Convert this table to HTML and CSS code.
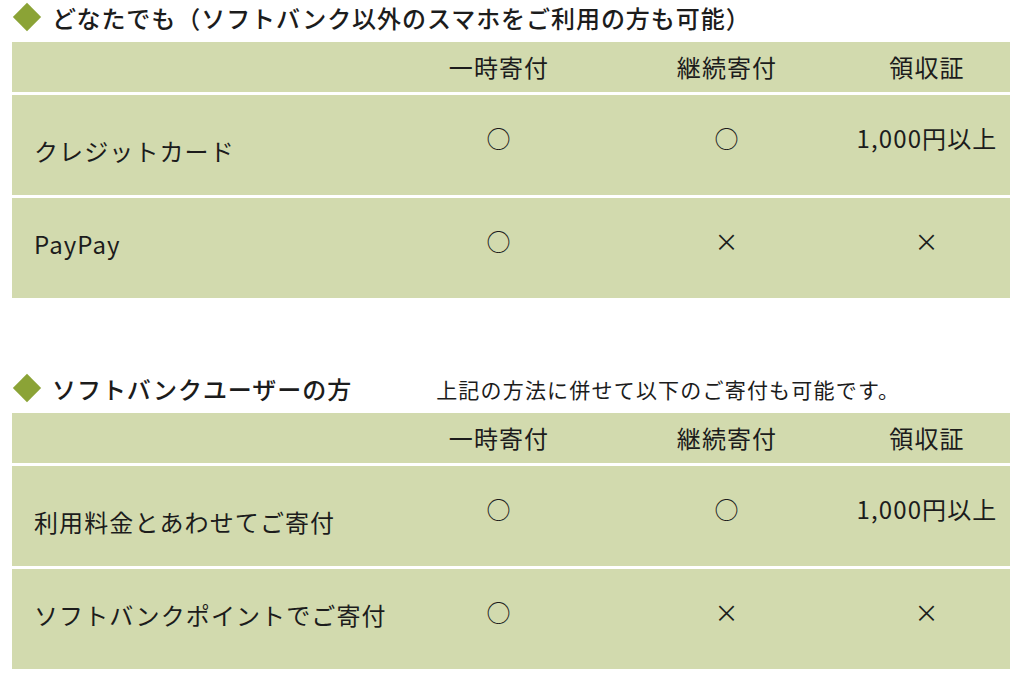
FILE: index.html
```html
<!DOCTYPE html>
<html lang="ja">
<head>
<meta charset="utf-8">
<title>寄付方法</title>
<link rel="stylesheet" href="styles.css">
</head>
<body>
<div class="page">
  <section class="block">
    <div class="heading">
      <span class="diamond"></span>
      <h2 class="title">どなたでも（ソフトバンク以外のスマホをご利用の方も可能）</h2>
    </div>
    <div class="table">
      <div class="row head">
        <div class="cell label"></div>
        <div class="cell">一時寄付</div>
        <div class="cell">継続寄付</div>
        <div class="cell">領収証</div>
      </div>
      <div class="row">
        <div class="cell label label-low">クレジットカード</div>
        <div class="cell">○</div>
        <div class="cell">○</div>
        <div class="cell">1,000円以上</div>
      </div>
      <div class="row">
        <div class="cell label">PayPay</div>
        <div class="cell">○</div>
        <div class="cell">×</div>
        <div class="cell">×</div>
      </div>
    </div>
  </section>

  <section class="block block-second">
    <div class="heading">
      <span class="diamond"></span>
      <h2 class="title">ソフトバンクユーザーの方</h2>
      <p class="note">上記の方法に併せて以下のご寄付も可能です。</p>
    </div>
    <div class="table">
      <div class="row head">
        <div class="cell label"></div>
        <div class="cell">一時寄付</div>
        <div class="cell">継続寄付</div>
        <div class="cell">領収証</div>
      </div>
      <div class="row">
        <div class="cell label label-low">利用料金とあわせてご寄付</div>
        <div class="cell">○</div>
        <div class="cell">○</div>
        <div class="cell">1,000円以上</div>
      </div>
      <div class="row">
        <div class="cell label">ソフトバンクポイントでご寄付</div>
        <div class="cell">○</div>
        <div class="cell">×</div>
        <div class="cell">×</div>
      </div>
    </div>
  </section>
</div>
</body>
</html>
```

FILE: styles.css
```css
html, body {
  margin: 0;
  padding: 0;
  background: #ffffff;
}

body {
  font-family: "Noto Sans CJK JP", "Noto Sans", sans-serif;
  color: #1c1c1c;
}

.page {
  width: 998px;
  margin-left: 12px;
}

.block-second {
  margin-top: 73px;
}

.heading {
  display: flex;
  align-items: center;
  height: 34px;
  margin-bottom: 8px;
}

.diamond {
  flex: none;
  width: 20px;
  height: 20px;
  margin-left: 5px;
  margin-right: 15px;
  background: #8ba336;
  transform: rotate(45deg);
}

.title {
  margin: 0;
  padding-top: 2px;
  font-size: 24px;
  font-weight: 500;
  letter-spacing: 0.95px;
  line-height: 34px;
  white-space: nowrap;
}

.note {
  margin: 0 0 0 84px;
  padding-top: 2px;
  font-size: 21px;
  font-weight: 400;
  letter-spacing: 1.2px;
  line-height: 34px;
  white-space: nowrap;
}

.table {
  display: flex;
  flex-direction: column;
  gap: 3px;
}

.row {
  display: grid;
  grid-template-columns: 376px 222px 234px 166px;
  align-items: start;
  height: 100px;
  background: #d2daae;
}

.row.head {
  height: 50px;
  align-items: center;
}

.cell {
  font-size: 24px;
  line-height: 36px;
  letter-spacing: 1.1px;
  text-align: center;
  padding-top: 25px;
  white-space: nowrap;
}

.head .cell {
  padding-top: 0;
}

.label {
  text-align: left;
  padding-left: 22px;
  padding-top: 28px;
}

.label-low {
  padding-top: 38px;
}
```
